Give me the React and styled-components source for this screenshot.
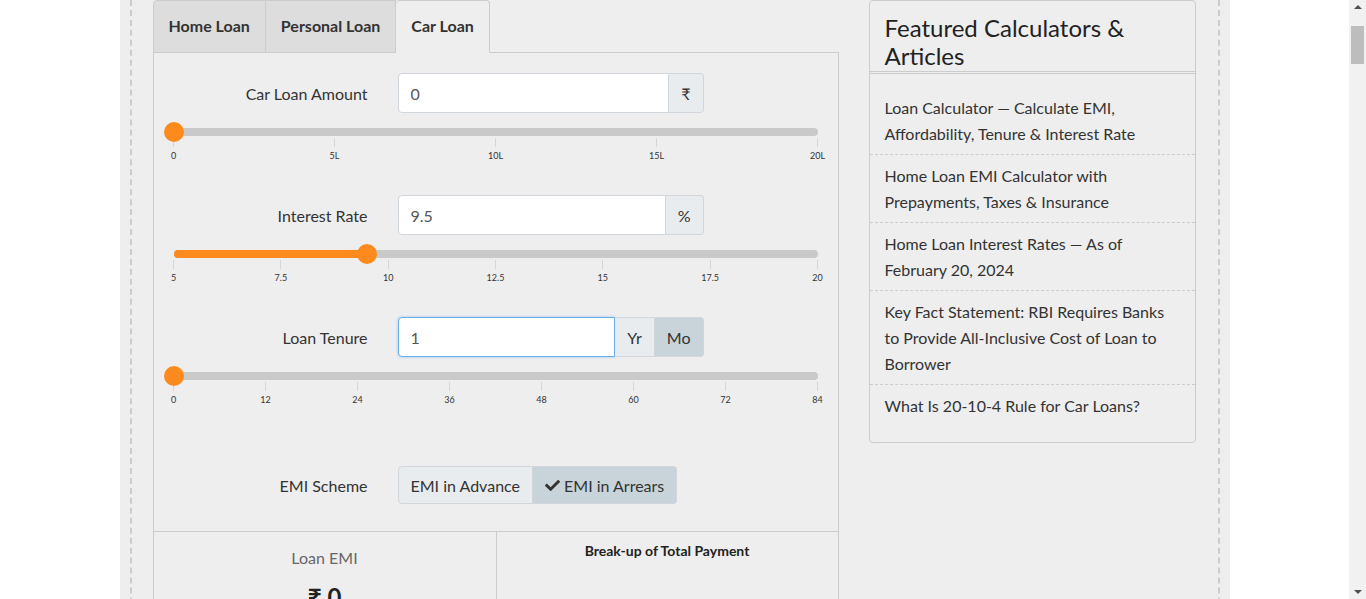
import React, { useState } from 'react';
import styled, { createGlobalStyle, css } from 'styled-components';
import { FaCheck } from 'react-icons/fa';

const GlobalStyle = createGlobalStyle`
  body {
    margin: 0;
    padding-right: 17px;
    background: #ffffff;
    font-family: Lato, "Open Sans", "Liberation Sans", sans-serif;
    color: #333;
  }
  * { box-sizing: border-box; }
`;

const Page = styled.div`
  width: 1110px;
  margin: 0 auto;
  padding: 0 10px;
  background: #eeeeee;
`;

const Inner = styled.div`
  display: flex;
  align-items: flex-start;
  gap: 30px;
  padding: 0 22px 40px 21px;
  border-left: 2px dashed #cccccc;
  border-right: 2px dashed #cccccc;
`;

const Main = styled.div`
  width: 686px;
  flex: none;
`;

const TabBar = styled.div`
  display: flex;
  height: 53px;
  border-bottom: 1px solid #cccccc;
`;

const Tab = styled.button`
  font-family: inherit;
  font-size: 16px;
  font-weight: 700;
  color: #333;
  padding: 0 15px 2px 15px;
  height: 53px;
  margin-bottom: -1px;
  background: #dddddd;
  border: 1px solid #cccccc;
  border-left-width: 0;
  cursor: pointer;

  &:first-child {
    border-left-width: 1px;
    border-top-left-radius: 4px;
  }

  ${p => p.active && css`
    background: #eeeeee;
    border-bottom-color: #eeeeee;
    border-top-left-radius: 4px;
    border-top-right-radius: 4px;
  `}
`;

const Panel = styled.div`
  border: 1px solid #cccccc;
  border-top: none;
  background: #eeeeee;
`;

const Form = styled.div`
  padding-top: 20px;
`;

const Row = styled.div`
  display: grid;
  grid-template-columns: 214px 306px;
  column-gap: 30px;
  align-items: center;
  margin-top: ${p => p.spaced ? '63px' : '0'};
`;

const Label = styled.label`
  text-align: right;
  font-size: 16px;
  color: #333;
`;

const Group = styled.div`
  display: flex;
  height: ${p => p.short ? '38px' : '40px'};
`;

const Input = styled.input`
  flex: 1;
  min-width: 0;
  font-family: inherit;
  font-size: 16px;
  color: #555;
  padding: 0 12px;
  background: #fff;
  border: 1px solid ${p => p.focused ? '#66afe9' : '#d0d6db'};
  border-radius: 4px 0 0 4px;
  box-shadow: ${p => p.focused ? '0 0 3px rgba(102, 175, 233, 0.6)' : 'none'};
  outline: none;
`;

const Addon = styled.button`
  font-family: inherit;
  font-size: 16px;
  color: #333;
  padding: 0 12px;
  background: ${p => p.active ? '#c8d3da' : '#e9ecef'};
  border: 1px solid #d0d6db;
  border-left: none;
  display: flex;
  align-items: center;
  gap: 4px;

  &:last-child {
    border-radius: 0 4px 4px 0;
  }
  &:first-child {
    border-left: 1px solid #d0d6db;
    border-radius: 4px 0 0 4px;
  }
`;

const SliderBlock = styled.div`
  padding: 0 20px;
  margin-top: 15px;
  margin-bottom: 36px;
`;

const Track = styled.div`
  position: relative;
  height: 8px;
  border-radius: 4px;
  background: #c9c9c9;
`;

const Fill = styled.div`
  position: absolute;
  left: 0;
  top: 0;
  bottom: 0;
  border-radius: 4px;
  background: #fd8a1d;
`;

const Handle = styled.div`
  position: absolute;
  top: 50%;
  width: 20px;
  height: 20px;
  margin: -10px 0 0 -10px;
  border-radius: 50%;
  background: #fd8a1d;
`;

const Scale = styled.div`
  display: flex;
  justify-content: space-between;
  margin-top: 2px;
  height: 21px;
`;

const Tick = styled.div`
  width: 0;
  display: flex;
  flex-direction: column;
  align-items: center;

  &::before {
    content: '';
    width: 1px;
    height: 9px;
    flex: none;
    background: #d2d6da;
  }
`;

const TickLabel = styled.span`
  margin-top: 3px;
  font-size: 9px;
  line-height: 12px;
  color: #333;
  white-space: nowrap;
`;

const EmiRow = styled(Row)`
  padding-bottom: 27px;
`;

const Results = styled.div`
  display: grid;
  grid-template-columns: 1fr 1fr;
  border-top: 1px solid #cccccc;
  min-height: 360px;
`;

const ResultCol = styled.div`
  text-align: center;
  padding-top: ${p => p.compact ? '11px' : '16px'};

  & + & {
    border-left: 1px solid #cccccc;
  }
`;

const ResultLabel = styled.div`
  font-size: 16px;
  line-height: 20px;
  color: #666;
`;

const ResultValue = styled.div`
  font-size: 24px;
  font-weight: 700;
  margin-top: 14px;
  color: #222;
`;

const ChartTitle = styled.div`
  font-size: 14px;
  font-weight: 700;
  color: #222;
  line-height: 16px;
`;

const Sidebar = styled.aside`
  width: 327px;
  flex: none;
  border: 1px solid #cccccc;
  border-radius: 4px;
  background: #eeeeee;
`;

const SideTitle = styled.h3`
  margin: 0;
  padding: 13px 15px 1px;
  font-size: 24px;
  font-weight: 400;
  line-height: 28px;
  color: #222;
  border-bottom: 3px double #cccccc;
`;

const SideList = styled.ul`
  list-style: none;
  margin: 0;
  padding: 13px 0 16px;
`;

const SideItem = styled.li`
  padding: 8px 15px 7px;
  font-size: 16px;
  line-height: 26px;
  color: #333;
  border-bottom: 1px dashed #cccccc;

  &:last-child {
    border-bottom: none;
  }
`;

/* stand-in for the browser scrollbar seen in the screenshot */
const ScrollBar = styled.div`
  position: fixed;
  top: 0;
  right: 0;
  width: 17px;
  height: 100vh;
  background: #f1f1f1;
  display: flex;
  flex-direction: column;
  align-items: center;
  justify-content: space-between;
  padding: 5px 0;
`;

const Arrow = styled.div`
  width: 0;
  height: 0;
  border-left: 4px solid transparent;
  border-right: 4px solid transparent;
  ${p => p.down
    ? css`border-top: 4px solid #505050;`
    : css`border-bottom: 4px solid #505050;`}
`;

const Thumb = styled.div`
  position: absolute;
  top: 26px;
  left: 2px;
  width: 13px;
  height: 38px;
  background: #bdbdbd;
`;

const Slider = ({ percent, fill, ticks }) => (
  <SliderBlock>
    <Track>
      {fill && <Fill style={{ width: `${percent}%` }} />}
      <Handle style={{ left: `${percent}%` }} />
    </Track>
    <Scale>
      {ticks.map(t => (
        <Tick key={t}>
          <TickLabel>{t}</TickLabel>
        </Tick>
      ))}
    </Scale>
  </SliderBlock>
);

const articles = [
  'Loan Calculator — Calculate EMI, Affordability, Tenure & Interest Rate',
  'Home Loan EMI Calculator with Prepayments, Taxes & Insurance',
  'Home Loan Interest Rates — As of February 20, 2024',
  'Key Fact Statement: RBI Requires Banks to Provide All-Inclusive Cost of Loan to Borrower',
  'What Is 20-10-4 Rule for Car Loans?',
];

const App = () => {
  const [tab, setTab] = useState('car');
  const [unit, setUnit] = useState('mo');
  const [scheme, setScheme] = useState('arrears');

  return (
    <Page>
      <GlobalStyle />
      <Inner>
        <Main>
          <TabBar>
            <Tab active={tab === 'home'} onClick={() => setTab('home')}>Home Loan</Tab>
            <Tab active={tab === 'personal'} onClick={() => setTab('personal')}>Personal Loan</Tab>
            <Tab active={tab === 'car'} onClick={() => setTab('car')}>Car Loan</Tab>
          </TabBar>
          <Panel>
            <Form>
              <Row>
                <Label>Car Loan Amount</Label>
                <Group>
                  <Input defaultValue="0" />
                  <Addon as="span">₹</Addon>
                </Group>
              </Row>
              <Slider percent={0} ticks={['0', '5L', '10L', '15L', '20L']} />

              <Row>
                <Label>Interest Rate</Label>
                <Group>
                  <Input defaultValue="9.5" />
                  <Addon as="span">%</Addon>
                </Group>
              </Row>
              <Slider percent={30} fill ticks={['5', '7.5', '10', '12.5', '15', '17.5', '20']} />

              <Row>
                <Label>Loan Tenure</Label>
                <Group>
                  <Input defaultValue="1" focused />
                  <Addon active={unit === 'yr'} onClick={() => setUnit('yr')}>Yr</Addon>
                  <Addon active={unit === 'mo'} onClick={() => setUnit('mo')}>Mo</Addon>
                </Group>
              </Row>
              <Slider percent={0} ticks={['0', '12', '24', '36', '48', '60', '72', '84']} />

              <EmiRow spaced>
                <Label>EMI Scheme</Label>
                <Group short>
                  <Addon active={scheme === 'advance'} onClick={() => setScheme('advance')}>
                    {scheme === 'advance' && <FaCheck size={15} />}EMI in Advance
                  </Addon>
                  <Addon active={scheme === 'arrears'} onClick={() => setScheme('arrears')}>
                    {scheme === 'arrears' && <FaCheck size={15} />}EMI in Arrears
                  </Addon>
                </Group>
              </EmiRow>
            </Form>
            <Results>
              <ResultCol>
                <ResultLabel>Loan EMI</ResultLabel>
                <ResultValue>₹ 0</ResultValue>
              </ResultCol>
              <ResultCol compact>
                <ChartTitle>Break-up of Total Payment</ChartTitle>
              </ResultCol>
            </Results>
          </Panel>
        </Main>
        <Sidebar>
          <SideTitle>Featured Calculators &amp; Articles</SideTitle>
          <SideList>
            {articles.map(a => (
              <SideItem key={a}>{a}</SideItem>
            ))}
          </SideList>
        </Sidebar>
      </Inner>
      <ScrollBar>
        <Arrow />
        <Thumb />
        <Arrow down />
      </ScrollBar>
    </Page>
  );
};

export default App;
